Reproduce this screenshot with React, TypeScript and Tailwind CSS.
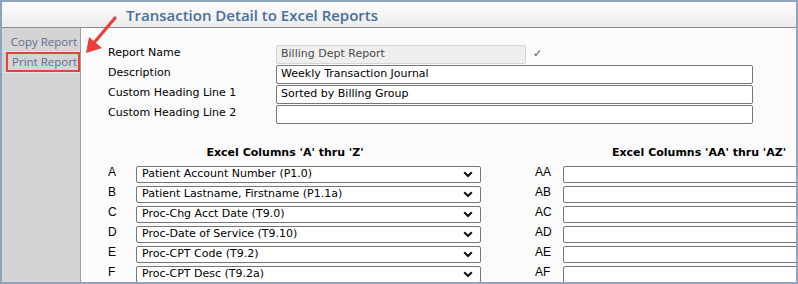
import React from "react";

const dv = { fontFamily: '"DejaVu Sans", Verdana, sans-serif' };
const ar = { fontFamily: '"Liberation Sans", Arial, sans-serif' };

function Chevron() {
  return (
    <svg width="10" height="7" viewBox="0 0 10 7" className="shrink-0">
      <polyline points="1.2,1.3 5,5 8.8,1.3" fill="none" stroke="#111" strokeWidth="2.1" />
    </svg>
  );
}

const leftRows: [string, string][] = [
  ["A", "Patient Account Number (P1.0)"],
  ["B", "Patient Lastname, Firstname (P1.1a)"],
  ["C", "Proc-Chg Acct Date (T9.0)"],
  ["D", "Proc-Date of Service (T9.10)"],
  ["E", "Proc-CPT Code (T9.2)"],
  ["F", "Proc-CPT Desc (T9.2a)"],
];
const rightRows = ["AA", "AB", "AC", "AD", "AE", "AF"];

export default function App() {
  return (
    <div className="relative w-[798px] h-[284px] border-2 border-[#8ea3c2] overflow-hidden flex flex-col bg-[#fbfbfb]">
      <div className="h-[26px] shrink-0 border-b border-[#8c8c8c] bg-gradient-to-b from-[#fefefe] to-[#ececec] flex items-center pl-[124px] pt-[1px]">
        <span
          className="text-[15px] font-semibold text-[#46709f] leading-none"
          style={{ fontFamily: '"Open Sans", "Noto Sans", sans-serif' }}
        >
          Transaction Detail to Excel Reports
        </span>
      </div>
      <div className="flex flex-1 min-h-0">
        <div
          className="w-[79px] shrink-0 bg-[#d4d4d4] border-r border-[#9e9e9e] flex flex-col text-[11.5px] text-[#5c6f90]"
          style={{ fontFamily: '"Open Sans", "Noto Sans", sans-serif' }}
        >
          <div className="h-[24px] border-b border-[#e4e4e4] flex items-end justify-end pr-[3px] pb-[1px]">Copy Report</div>
          <div className="h-[20px] ml-[4px] border-2 border-[#e8413c] flex items-center justify-end pr-[1px]">Print Report</div>
          <div className="h-[1px] bg-[#e4e4e4]" />
        </div>
        <div className="flex-1 min-w-0 overflow-hidden pl-[27px] pt-[17px] text-[11px] text-black" style={dv}>
          <div className="flex flex-col gap-[1px]">
            <div className="flex items-start h-[19px]">
              <div className="w-[168px] shrink-0">Report Name</div>
              <div className="w-[250px] h-[19px] bg-[#efefef] border border-[#d4d4d4] rounded-[2px] flex items-center pl-[4px] text-[#4a4a4a]">
                Billing Dept Report
              </div>
              <div className="ml-[7px] pt-[1px] text-[#555]">✓</div>
            </div>
            <div className="flex items-start h-[19px]">
              <div className="w-[168px] shrink-0">Description</div>
              <div className="w-[477px] h-[19px] bg-white border border-[#777] rounded-[2px] flex items-center pl-[4px]">
                Weekly Transaction Journal
              </div>
            </div>
            <div className="flex items-start h-[19px]">
              <div className="w-[168px] shrink-0">Custom Heading Line 1</div>
              <div className="w-[477px] h-[19px] bg-white border border-[#777] rounded-[2px] flex items-center pl-[4px]">
                Sorted by Billing Group
              </div>
            </div>
            <div className="flex items-start h-[19px]">
              <div className="w-[168px] shrink-0">Custom Heading Line 2</div>
              <div className="w-[477px] h-[19px] bg-white border border-[#777] rounded-[2px]" />
            </div>
          </div>

          <div className="flex mt-[22px]">
            <div className="w-[373px] shrink-0">
              <div className="w-[354px] text-center font-bold leading-[13px]">Excel Columns 'A' thru 'Z'</div>
              <div className="mt-[7px] flex flex-col gap-[3px]">
                {leftRows.map(([l, v]) => (
                  <div key={l} className="flex items-start h-[17px]">
                    <div className="w-[28px] shrink-0 text-[12px] leading-[13px]" style={ar}>{l}</div>
                    <div className="w-[345px] h-[17px] bg-white border border-[#767676] rounded-[2px] flex items-center justify-between pl-[5px] pr-[7px]">
                      <span>{v}</span>
                      <Chevron />
                    </div>
                  </div>
                ))}
              </div>
            </div>
            <div className="ml-[54px] shrink-0">
              <div className="w-[328px] text-center font-bold leading-[13px]">Excel Columns 'AA' thru 'AZ'</div>
              <div className="mt-[7px] flex flex-col gap-[3px]">
                {rightRows.map((l) => (
                  <div key={l} className="flex items-start h-[17px]">
                    <div className="w-[28px] shrink-0 text-[12px] leading-[13px]" style={ar}>{l}</div>
                    <div className="w-[300px] h-[17px] bg-white border border-[#767676] rounded-[2px]" />
                  </div>
                ))}
              </div>
            </div>
          </div>
        </div>
      </div>
      <svg className="absolute left-0 top-0 pointer-events-none" width="140" height="70" viewBox="0 0 140 70">
        <line x1="113" y1="16" x2="91" y2="42" stroke="#e8413c" strokeWidth="3.2" strokeLinecap="round" />
        <polygon points="84,51 87,35 100,46" fill="#e8413c" />
      </svg>
    </div>
  );
}
